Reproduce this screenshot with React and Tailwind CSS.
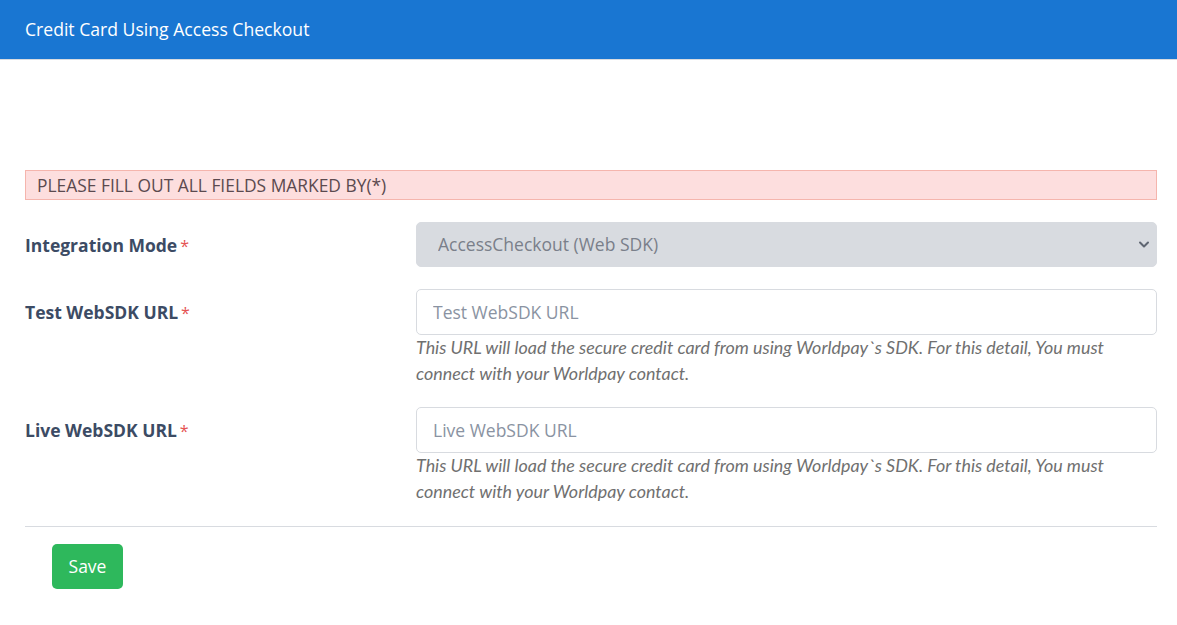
import React from "react";

const helpText =
  "This URL will load the secure credit card from using Worldpay`s SDK. For this detail, You must connect with your Worldpay contact.";

const FieldRow = ({ label, children, className = "" }) => (
  <div className={`flex ${className}`}>
    <div className="w-[391px] shrink-0 pt-[10px]">
      <span className="text-[17.5px] font-bold text-[#3c4b64]">{label}</span>
      <span className="ml-[3px] text-[16px] text-[#e55353]">*</span>
    </div>
    <div className="flex-1">{children}</div>
  </div>
);

const TextInput = ({ placeholder }) => (
  <div>
    <input
      type="text"
      placeholder={placeholder}
      className="h-[46px] w-full rounded-[5px] border border-[#d8dbe0] bg-white px-[16px] text-[17.5px] text-[#5c6873] outline-none placeholder:text-[#8a93a2]"
    />
    <p className="-mt-[1px] pr-[30px] text-[17.9px] italic leading-[26px] text-[#707070] [font-family:Lato,'Open_Sans',sans-serif]">
      {helpText}
    </p>
  </div>
);

export default function App() {
  return (
    <div className="min-h-screen bg-white [font-family:'Open_Sans','Noto_Sans',sans-serif]">
      <div className="flex h-[60px] items-center border-b border-[#d8dbe0] bg-[#1976d2] px-[25px]">
        <h1 className="text-[17.6px] text-white">Credit Card Using Access Checkout</h1>
      </div>

      <div className="pl-[25px] pr-[20px] pt-[110px]">
        <div className="mb-[22px] flex h-[30px] items-center border border-[#f5b5ad] bg-[#fddede] px-[11px] text-[17.4px] text-[#5b4a4f]">
          PLEASE FILL OUT ALL FIELDS MARKED BY(*)
        </div>

        <FieldRow label="Integration Mode">
          <div className="relative">
            <select
              disabled
              className="h-[45px] w-full appearance-none rounded-[5px] border border-[#d8dbe0] bg-[#d8dbe0] pl-[21px] text-[17.5px] text-[#7a7f8a]"
            >
              <option>AccessCheckout (Web SDK)</option>
            </select>
            <svg
              className="pointer-events-none absolute right-[7px] top-[18px]"
              width="12"
              height="9"
              viewBox="0 0 12 9"
              fill="none"
            >
              <path d="M2 2.5l4 4 4-4" stroke="#5f6672" strokeWidth="2" strokeLinecap="round" strokeLinejoin="round" />
            </svg>
          </div>
        </FieldRow>

        <FieldRow label="Test WebSDK URL" className="mt-[22px]">
          <TextInput placeholder="Test WebSDK URL" />
        </FieldRow>

        <FieldRow label="Live WebSDK URL" className="mt-[21px]">
          <TextInput placeholder="Live WebSDK URL" />
        </FieldRow>

        <hr className="mt-[22px] border-t border-[#d8dbe0]" />

        <div className="px-[27px] pt-[17px]">
          <button className="h-[45px] w-[71px] rounded-[5px] bg-[#2eb85c] text-[17.5px] text-white">
            Save
          </button>
        </div>
      </div>
    </div>
  );
}
